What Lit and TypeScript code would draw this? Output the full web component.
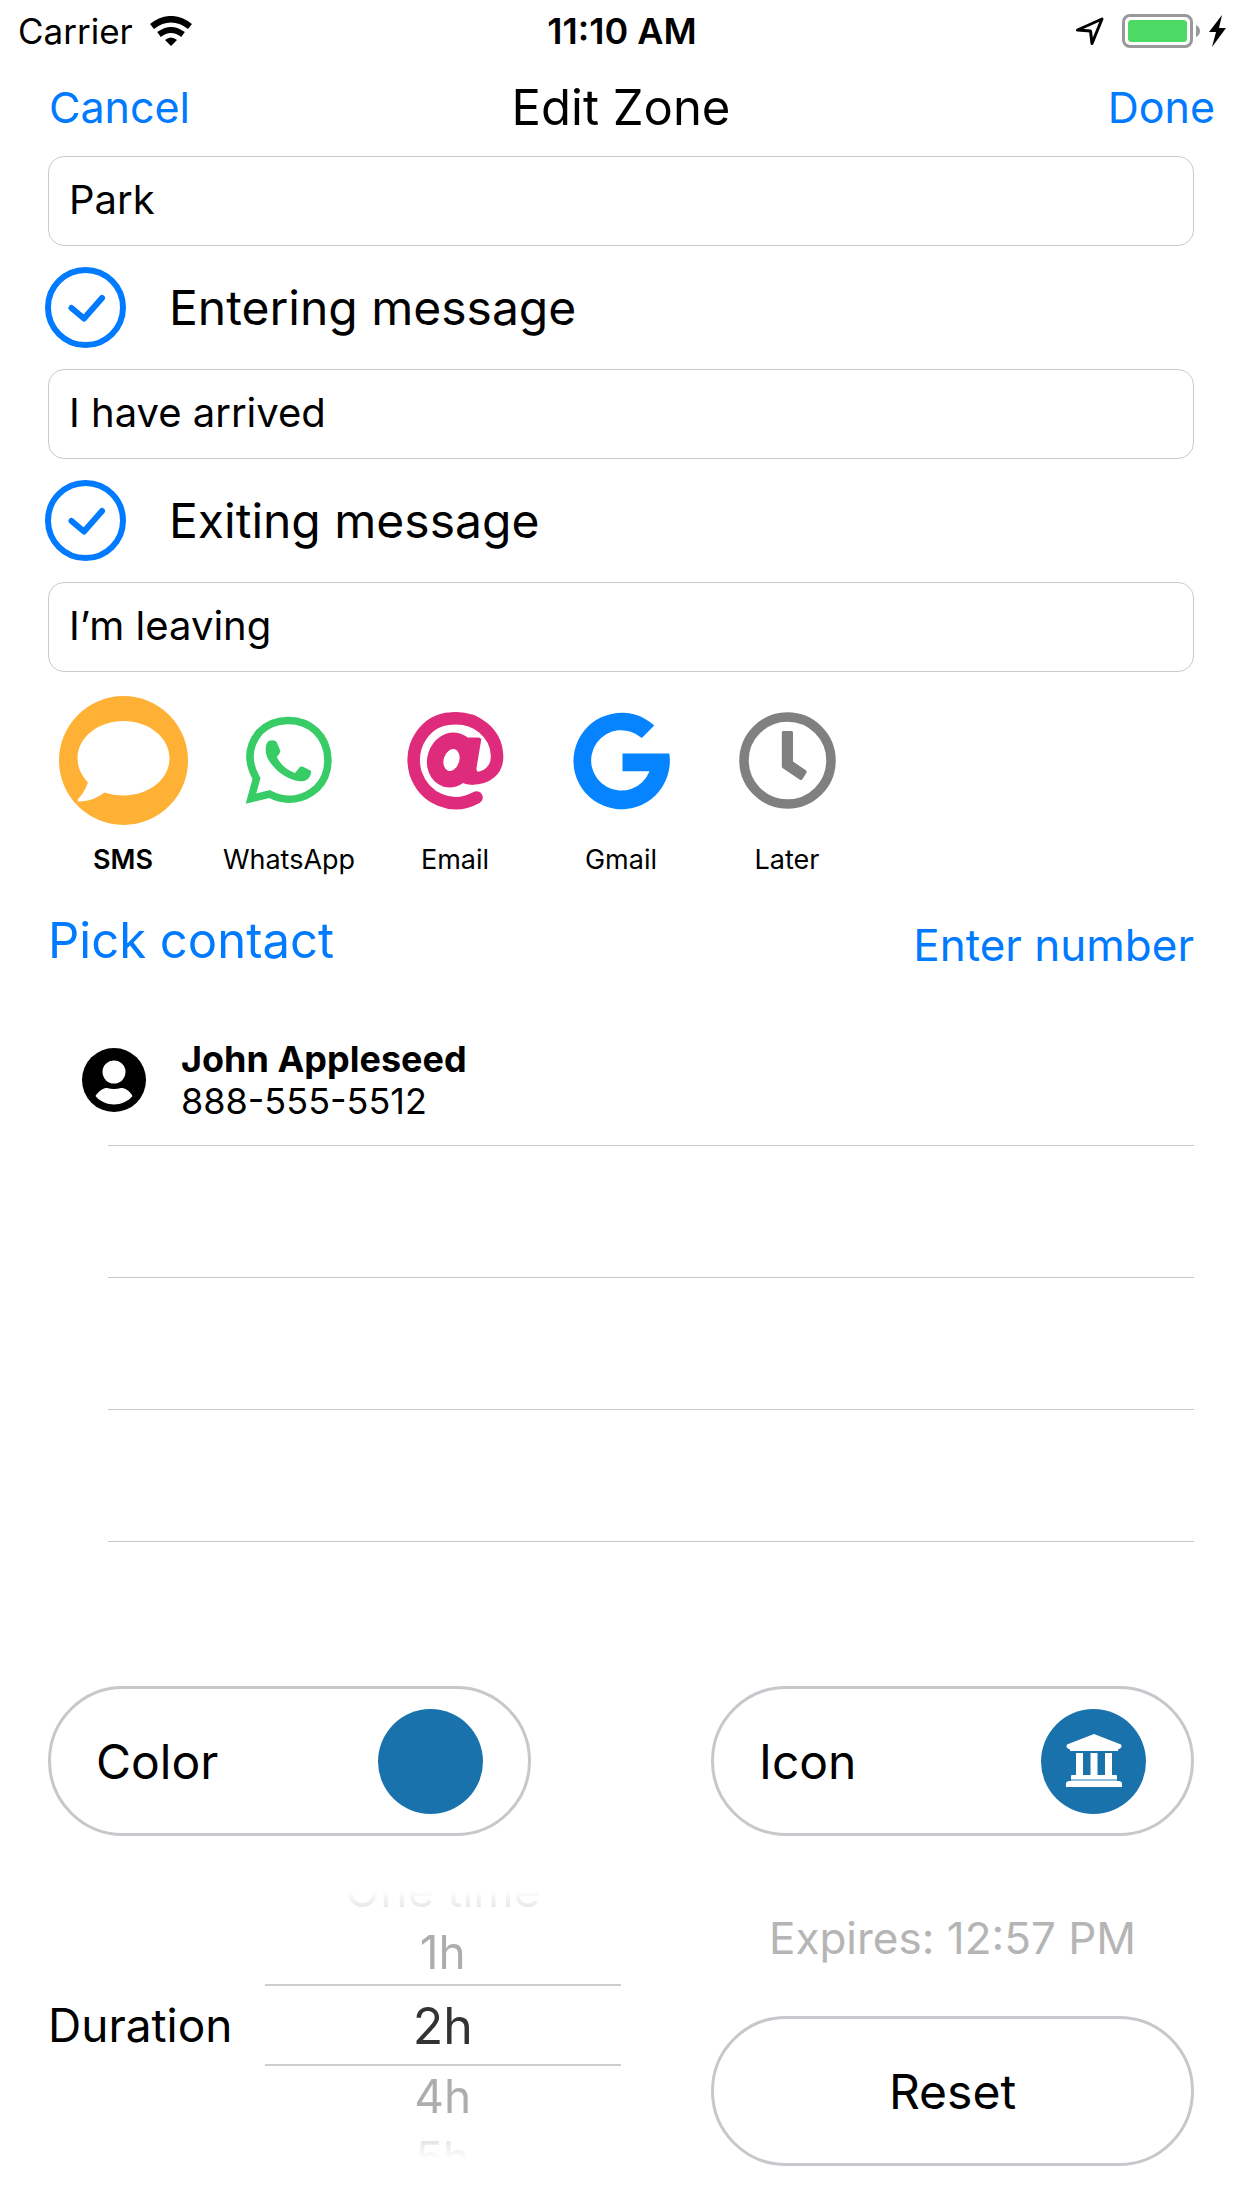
import { LitElement, html, css, svg, nothing } from "lit";
import { customElement, state } from "lit/decorators.js";
import { classMap } from "lit/directives/class-map.js";

interface Service {
  id: string;
  label: string;
  icon: unknown;
}

const SERVICES: Service[] = [
  {
    id: "sms",
    label: "SMS",
    icon: svg`
      <circle cx="64.5" cy="64.5" r="64.5" fill="#ffb135"/>
      <path fill="#fff" d="M64.5 25C90 25 110.500 41.500 110.500 62.500C110.500 83 90 99.500 64.500 99.500C57.500 99.500 51.500 98.500 45.500 96.500C39 101.500 30 105.500 20.500 105.500C18.500 105.500 18 104 19.500 102.500C23.500 98.500 27 92 29 86.500C22.500 79.500 18.500 71.500 18.500 62.500C18.500 41.500 39 25 64.500 25Z"/>`,
  },
  {
    id: "whatsapp",
    label: "WhatsApp",
    icon: svg`
      <path fill="none" stroke="#37cc66" stroke-width="7.500" stroke-miterlimit="6" d="M26 102.500L31.500 82.500C21.500 65 23 50 34.500 36C49 21 76 20.500 91 35C106.500 50 107 77 92 92C79 104 61 107 44.500 98Z"/>
      <path fill="#37cc66" d="M42 47C43.500 44.500 46 44 48.500 44.500C50.500 44.500 51.500 45.500 52.300 47.500L55 54C55.800 56 55 57.500 51.800 61C55.500 68.500 61.500 74 70 77L74.500 71.500C75.500 70.200 76.500 70.200 78 70.800L85 74.200C86.300 75 86.300 76 85.800 78C84 84 79.500 85.500 75 85.200C58 84 42 66.500 41 57C40.600 53 40.500 50 42 47Z"/>`,
  },
  {
    id: "email",
    label: "Email",
    icon: svg`
      <g fill="none" stroke="#df2b7b">
        <path stroke-width="12.500" stroke-linecap="round" d="M85.500 101.500C61 115 33.500 103 24.500 77C17 49 35 24 60 22.500C85 20 105 37 106 59C107 75 95 82.500 81 82.500"/>
        <ellipse stroke-width="16.500" cx="60.500" cy="64" rx="16" ry="19.500" transform="rotate(18 60.500 64)"/>
      </g>
      <path fill="#df2b7b" d="M74 44C75 41.500 76.500 41.500 78 41.500H87C89.500 41.500 90.500 42.500 90 45L85.500 72C85.200 76 87 76.500 89 76L91 84L83 88.500C75 89 70 87.500 68 82L67 74L73 62Z"/>`,
  },
  {
    id: "gmail",
    label: "Gmail",
    icon: svg`
      <path fill="#0684ff" d="M97.300 29.500A48.200 48.200 0 1 0 112.300 57.600H65.500V75.300H92.500A30.200 30.200 0 1 1 84.800 42.100Z"/>`,
  },
  {
    id: "later",
    label: "Later",
    icon: svg`
      <circle cx="64.500" cy="64.500" r="43.500" fill="none" stroke="#808080" stroke-width="9.500"/>
      <path fill="#808080" d="M60.500 35H68C69.500 35 70 35.500 70 37V65.500L82.500 74C84 75 84 76 83.300 77L79.500 83C78.700 84.200 77.700 84.200 76.500 83.400L59.500 72C58.800 71.400 58.800 71 58.800 70V37C58.800 35.500 59.300 35 60.500 35Z"/>`,
  },
];

const DURATIONS = ["One time", "1h", "2h", "4h", "5h"];

@customElement("app-root")
export class AppRoot extends LitElement {
  @state() private service = "sms";
  @state() private duration = "2h";

  static styles = css`
    :host {
      display: block;
      min-height: 100vh;
      background: #fff;
      color: #000;
      font-family: Inter, "Liberation Sans", sans-serif;
      font-size: 48px;
      line-height: 60px;
    }
    * {
      box-sizing: border-box;
    }
    button,
    input {
      margin: 0;
      padding: 0;
      border: 0;
      background: none;
      color: inherit;
      font: inherit;
    }
    button {
      cursor: pointer;
    }
    svg {
      display: block;
      flex: none;
    }
    .bar {
      display: grid;
      grid-template-columns: 1fr auto 1fr;
      align-items: center;
    }
    .end {
      justify-self: end;
    }
    .status {
      height: 62px;
      padding: 0 16px 0 18px;
      font-size: 35px;
    }
    .clock {
      font-size: 36px;
      font-weight: 600;
    }
    .cluster {
      display: flex;
      align-items: center;
      gap: 17px;
    }
    .nav {
      height: 94px;
      padding: 0 27px 4px;
    }
    .start {
      padding-left: 22px;
    }
    .title {
      margin: 0;
      padding-top: 2px;
      font-size: 49px;
      font-weight: 400;
    }
    .link {
      display: block;
      color: #007aff;
      font-size: 43px;
    }
    .pick .link {
      font-size: 44px;
    }
    .pick .large {
      font-size: 49px;
    }
    main {
      padding: 0 48px 42px;
    }
    .field {
      display: block;
      width: 100%;
      height: 90px;
      padding: 0 20px 4px;
      border: 1px solid #cbcbcb;
      border-radius: 16px;
      font-size: 40px;
      outline: none;
    }
    .toggle {
      display: flex;
      align-items: center;
      gap: 43px;
      height: 123px;
      margin-left: -3px;
    }
    .tick {
      display: grid;
    }
    .tick > * {
      grid-area: 1 / 1;
    }
    .tick input {
      width: 81px;
      height: 81px;
      border: 6px solid #007aff;
      border-radius: 50%;
      appearance: none;
    }
    .tick svg {
      pointer-events: none;
      visibility: hidden;
    }
    .tick input:checked + svg {
      visibility: visible;
    }
    .services {
      display: flex;
      margin: 24px -8px 0;
    }
    .service {
      display: flex;
      flex-direction: column;
      align-items: center;
      gap: 16px;
      width: 166px;
      font-size: 27px;
      line-height: 38px;
    }
    .service.active {
      font-weight: 600;
    }
    .pick {
      display: flex;
      align-items: end;
      justify-content: space-between;
      height: 64px;
      margin-top: 32px;
    }
    .pick .large {
      align-self: start;
    }
    .contacts {
      margin: 39px 0 0;
      padding: 0;
      list-style: none;
    }
    .contact {
      display: flex;
      gap: 35px;
      align-items: center;
      height: 132px;
      padding-left: 34px;
      background: linear-gradient(#c8c7cc, #c8c7cc) 60px 100% / 100% 1px no-repeat;
      font-size: 36px;
      line-height: 42px;
    }
    .name {
      font-weight: 700;
    }
    .grid {
      display: grid;
      grid-template-columns: 1fr 1fr;
      column-gap: 180px;
      margin-top: 144px;
    }
    .pill {
      display: flex;
      align-items: center;
      justify-content: space-between;
      width: 100%;
      height: 150px;
      padding: 0 45px;
      border: 3px solid #c7c7cc;
      border-radius: 75px;
    }
    .pill.center {
      justify-content: center;
    }
    .pill-text {
      padding-top: 2px;
    }
    .swatch {
      display: grid;
      place-items: center;
      width: 105px;
      height: 105px;
      border-radius: 50%;
      background: #1972ac;
    }
    .bottom {
      display: grid;
      grid-template-columns: 1fr 483px;
      align-items: start;
      column-gap: 90px;
      margin-top: 54px;
    }
    .duration {
      display: grid;
      grid-template-columns: auto 1fr;
      column-gap: 32px;
      align-items: center;
    }
    .caption {
      font-size: 46px;
    }
    .wheel {
      display: flex;
      flex-direction: column;
      justify-content: center;
      height: 270px;
      overflow: hidden;
      text-align: center;
      color: #adadad;
      font-size: 46px;
      mask-image: linear-gradient(transparent, #000 26px, #000 244px, transparent);
    }
    .wheel label {
      flex: none;
      height: 62px;
      cursor: pointer;
    }
    .wheel input {
      position: absolute;
      opacity: 0;
      pointer-events: none;
    }
    .wheel .chosen {
      height: 82px;
      border: solid #cdcdcd;
      border-width: 2px 0;
      color: #333;
      font-size: 50px;
      line-height: 80px;
    }
    .wheel .far {
      color: #dcdcdc;
    }
    .expiry {
      display: flex;
      flex-direction: column;
      align-items: center;
      gap: 48px;
      padding-top: 18px;
    }
    .expires {
      color: #b5b5b5;
      font-size: 44px;
    }
  `;

  private renderToggle(text: string) {
    return html`
      <label class="toggle">
        <span class="tick">
          <input type="checkbox" checked />
          <svg width="81" height="81" viewBox="0 0 81 81" fill="none" stroke="#007aff" stroke-width="6" stroke-linecap="round" stroke-linejoin="round">
            <path d="M26.500 41L39 51.500L57 31" />
          </svg>
        </span>
        <span>${text}</span>
      </label>
    `;
  }

  render() {
    return html`
      <div class="bar status">
        <span class="cluster">
          Carrier
          <svg width="42" height="30" viewBox="0 0 42 30">
            <g fill="none" stroke="#000">
              <path stroke-width="6.500" d="M2 10.500Q21 -4 40 10.500" />
              <path stroke-width="6" d="M9 18.500Q21 9.500 33 18.500" />
            </g>
            <path d="M15 24Q21 19 27 24L21 30Z" />
          </svg>
        </span>
        <span class="clock">11:10 AM</span>
        <span class="cluster end">
          <svg width="30" height="30" viewBox="0 0 30 30" fill="none" stroke="#000" stroke-width="3" stroke-linejoin="round">
            <path d="M2.500 14L27 3L17 27.500L15.500 15Z" />
          </svg>
          <svg width="104" height="34" viewBox="0 0 104 34">
            <rect x="1.500" y="1.500" width="68" height="31" rx="6.500" fill="none" stroke="#999" stroke-width="3" />
            <rect x="6" y="6" width="59" height="22" rx="3.500" fill="#4cd964" />
            <path fill="#999" d="M74 11Q78 13 78 17T74 23Z" />
            <path d="M100 1L87 18H94L90 33L104 14H97Z" />
          </svg>
        </span>
      </div>

      <header class="bar nav">
        <span class="start"><button class="link">Cancel</button></span>
        <h1 class="title">Edit Zone</h1>
        <button class="link end">Done</button>
      </header>

      <main>
        <input class="field" type="text" aria-label="Zone name" value="Park" />
        ${this.renderToggle("Entering message")}
        <input class="field" type="text" aria-label="Entering message text" value="I have arrived" />
        ${this.renderToggle("Exiting message")}
        <input class="field" type="text" aria-label="Exiting message text" value="I’m leaving" />

        <div class="services">
          ${SERVICES.map(
            (s) => html`
              <button
                class=${classMap({ service: true, active: s.id === this.service })}
                aria-pressed=${s.id === this.service}
                @click=${() => (this.service = s.id)}
              >
                <svg width="129" height="129" viewBox="0 0 129 129">${s.icon}</svg>
                <span>${s.label}</span>
              </button>
            `
          )}
        </div>

        <div class="pick">
          <button class="link large">Pick contact</button>
          <button class="link">Enter number</button>
        </div>

        <ul class="contacts">
          ${[true, false, false, false].map(
            (filled) => html`
              <li class="contact">
                ${filled
                  ? html`
                      <svg width="64" height="64" viewBox="0 0 64 64">
                        <circle cx="32" cy="32" r="32" />
                        <circle cx="32" cy="24" r="11.500" fill="#fff" />
                        <path fill="#fff" d="M13.500 48C17 42.500 21.500 40 25 40Q32 42 39 40C43 40 47.500 42.500 50.500 48C46 53.500 39 56.500 32 56.500S18 53.500 13.500 48Z" />
                      </svg>
                      <div>
                        <div class="name">John Appleseed</div>
                        <div>888-555-5512</div>
                      </div>
                    `
                  : nothing}
              </li>
            `
          )}
        </ul>

        <div class="grid">
          <button class="pill">
            <span class="pill-text">Color</span>
            <span class="swatch"></span>
          </button>
          <button class="pill">
            <span class="pill-text">Icon</span>
            <span class="swatch">
              <svg width="56" height="54" viewBox="0 0 56 54">
                <g fill="#fff">
                  <path d="M28 0L55 10.500Q57 14 52 15.500V17H4V15.500Q-1 14 1 10.500Z" />
                  <path d="M10 19H17V41H10ZM24.500 19H31.500V41H24.500ZM39 19H46V41H39Z" />
                  <path d="M5 42Q5 41 6 41H50Q51 41 51 42V45H5Z" />
                  <path d="M0 49Q1 47 3 47H53Q55 47 56 49V53H0Z" />
                </g>
                <path fill="#8fbbd8" d="M5 45H51V47H5Z" />
              </svg>
            </span>
          </button>
        </div>

        <div class="bottom">
          <div class="duration" role="radiogroup" aria-labelledby="duration">
            <span class="caption" id="duration">Duration</span>
            <div class="wheel">
              ${DURATIONS.map((d, i) => {
                const distance = Math.abs(i - DURATIONS.indexOf(this.duration));
                return html`
                  <label class=${classMap({ chosen: distance === 0, far: distance > 1 })}>
                    <input
                      type="radio"
                      name="duration"
                      .checked=${d === this.duration}
                      @change=${() => (this.duration = d)}
                    />${d}
                  </label>
                `;
              })}
            </div>
          </div>
          <div class="expiry">
            <span class="expires">Expires: 12:57 PM</span>
            <button class="pill center"><span class="pill-text">Reset</span></button>
          </div>
        </div>
      </main>
    `;
  }
}
